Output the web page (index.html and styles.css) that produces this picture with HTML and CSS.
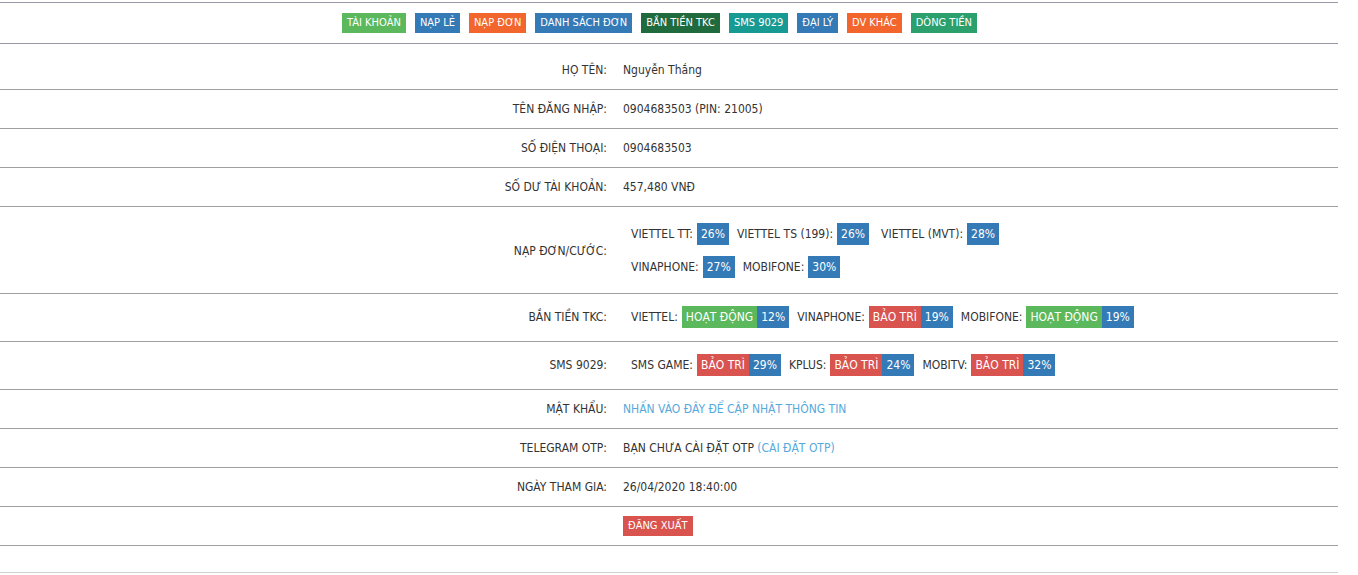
FILE: index.html
```html
<!DOCTYPE html>
<html lang="vi">
<head>
<meta charset="utf-8">
<title>Tài khoản</title>
<link rel="stylesheet" href="styles.css">
</head>
<body>
<div class="page">
  <nav class="nav">
    <a class="btn c-green">TÀI KHOẢN</a>
    <a class="btn c-blue">NẠP LẺ</a>
    <a class="btn c-orange">NẠP ĐƠN</a>
    <a class="btn c-blue">DANH SÁCH ĐƠN</a>
    <a class="btn c-dark">BẮN TIỀN TKC</a>
    <a class="btn c-teal">SMS 9029</a>
    <a class="btn c-blue">ĐẠI LÝ</a>
    <a class="btn c-orange">DV KHÁC</a>
    <a class="btn c-mint">DÒNG TIỀN</a>
  </nav>

  <div class="row first">
    <div class="label">HỌ TÊN:</div>
    <div class="value">Nguyễn Thắng</div>
  </div>
  <div class="row">
    <div class="label">TÊN ĐĂNG NHẬP:</div>
    <div class="value">0904683503 (PIN: 21005)</div>
  </div>
  <div class="row">
    <div class="label">SỐ ĐIỆN THOẠI:</div>
    <div class="value">0904683503</div>
  </div>
  <div class="row">
    <div class="label">SỐ DƯ TÀI KHOẢN:</div>
    <div class="value">457,480 VNĐ</div>
  </div>
  <div class="row multi">
    <div class="label">NẠP ĐƠN/CƯỚC:</div>
    <div class="value rates">
      <div class="line">
        <span class="item">VIETTEL TT: <span class="tag blue">26%</span></span>
        <span class="item">VIETTEL TS (199): <span class="tag blue">26%</span></span>
        <span class="item wide">VIETTEL (MVT): <span class="tag blue">28%</span></span>
      </div>
      <div class="line">
        <span class="item">VINAPHONE: <span class="tag blue">27%</span></span>
        <span class="item">MOBIFONE: <span class="tag blue">30%</span></span>
      </div>
    </div>
  </div>
  <div class="row badge-row">
    <div class="label">BẮN TIỀN TKC:</div>
    <div class="value rates">
      <div class="line">
        <span class="item">VIETTEL: <span class="pair"><span class="tag green">HOẠT ĐỘNG</span><span class="tag blue">12%</span></span></span>
        <span class="item">VINAPHONE: <span class="pair"><span class="tag red">BẢO TRÌ</span><span class="tag blue">19%</span></span></span>
        <span class="item">MOBIFONE: <span class="pair"><span class="tag green">HOẠT ĐỘNG</span><span class="tag blue">19%</span></span></span>
      </div>
    </div>
  </div>
  <div class="row badge-row">
    <div class="label">SMS 9029:</div>
    <div class="value rates">
      <div class="line">
        <span class="item">SMS GAME: <span class="pair"><span class="tag red">BẢO TRÌ</span><span class="tag blue">29%</span></span></span>
        <span class="item">KPLUS: <span class="pair"><span class="tag red">BẢO TRÌ</span><span class="tag blue">24%</span></span></span>
        <span class="item">MOBITV: <span class="pair"><span class="tag red">BẢO TRÌ</span><span class="tag blue">32%</span></span></span>
      </div>
    </div>
  </div>
  <div class="row">
    <div class="label">MẬT KHẨU:</div>
    <div class="value"><a class="link">NHẤN VÀO ĐÂY ĐỂ CẬP NHẬT THÔNG TIN</a></div>
  </div>
  <div class="row">
    <div class="label">TELEGRAM OTP:</div>
    <div class="value">BẠN CHƯA CÀI ĐẶT OTP <a class="link">(CÀI ĐẶT OTP)</a></div>
  </div>
  <div class="row">
    <div class="label">NGÀY THAM GIA:</div>
    <div class="value">26/04/2020 18:40:00</div>
  </div>
  <div class="row">
    <div class="label"></div>
    <div class="value"><a class="btn c-red">ĐĂNG XUẤT</a></div>
  </div>
  <div class="row empty"></div>
</div>
</body>
</html>
```

FILE: styles.css
```css
html, body {
  margin: 0;
  padding: 0;
  background: #ffffff;
}

body {
  font-family: "DejaVu Sans Condensed", "Liberation Sans", sans-serif;
  font-size: 12px;
  color: #333333;
}

.page {
  width: 1338px;
  padding-top: 2px;
}

.nav {
  display: flex;
  justify-content: center;
  align-items: center;
  gap: 9px;
  height: 40px;
  padding-right: 19px;
  border-top: 1px solid #9a9aa6;
  border-bottom: 1px solid #9a9aa6;
}

.btn {
  display: inline-block;
  height: 20px;
  line-height: 20px;
  padding: 0 5px;
  font-size: 11px;
  color: #ffffff;
  text-decoration: none;
  white-space: nowrap;
}

.c-green { background: #5cb85c; }
.c-blue { background: #337ab7; }
.c-orange { background: #f2652c; }
.c-dark { background: #1f6b3d; }
.c-teal { background: #179a91; }
.c-mint { background: #2b9f6c; }
.c-red { background: #d9534f; }

.row {
  display: grid;
  grid-template-columns: 615px 1fr;
  align-items: center;
  box-sizing: border-box;
  min-height: 39px;
  border-bottom: 1px solid #a0a0a0;
}

.row.first {
  min-height: 46px;
  padding-top: 7px;
}

.label {
  text-align: right;
  padding-right: 8px;
  white-space: nowrap;
}

.value {
  padding-left: 8px;
  white-space: nowrap;
}

.rates {
  padding-left: 16px;
  display: flex;
  flex-direction: column;
  gap: 11px;
}

.row.multi {
  padding: 16px 0 15px;
}

.row.badge-row {
  padding: 12px 0 13px;
  min-height: 48px;
}

.line {
  display: flex;
  align-items: center;
  gap: 8px;
}

.item {
  display: inline-flex;
  align-items: center;
  gap: 4px;
}

.item.wide {
  margin-left: 4px;
}

.pair {
  display: inline-flex;
}

.tag {
  display: inline-block;
  height: 22px;
  line-height: 22px;
  padding: 0 4px;
  color: #ffffff;
}

.tag.blue { background: #337ab7; }
.tag.green { background: #5cb85c; }
.tag.red { background: #d9534f; }

.link {
  color: #56a9dd;
  text-decoration: none;
}

.row.empty {
  min-height: 27px;
  border-bottom-color: #d0d0d0;
}
```
